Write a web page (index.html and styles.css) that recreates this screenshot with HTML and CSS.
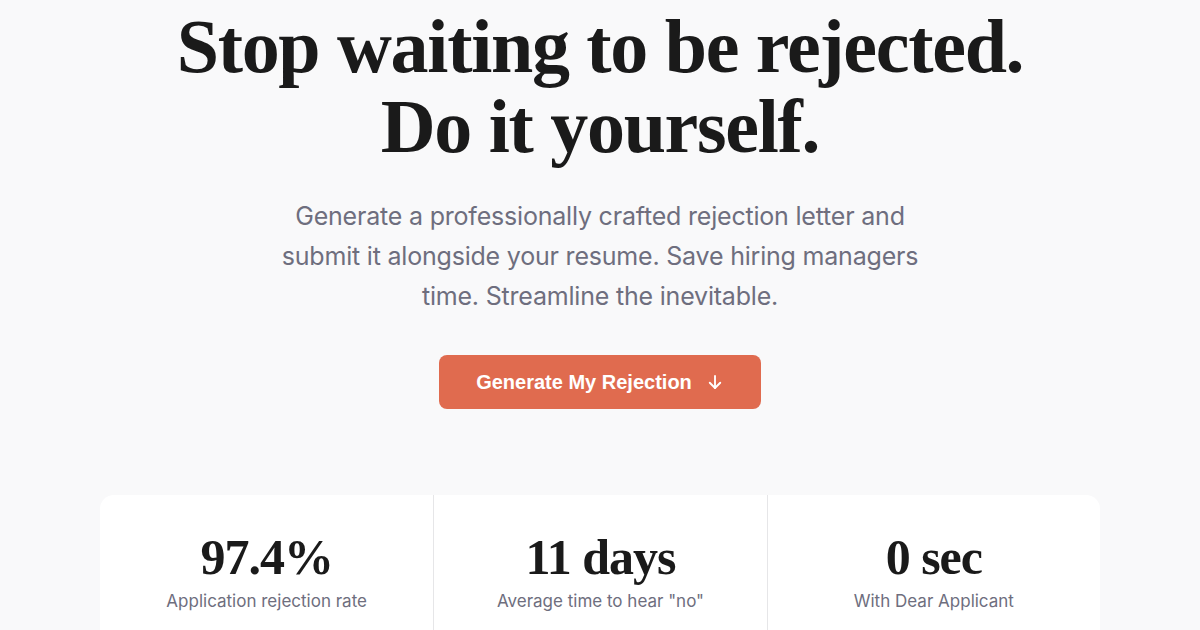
FILE: index.html
```html
<!DOCTYPE html>
<html lang="en">
<head>
    <meta charset="UTF-8">
    <meta name="viewport" content="width=device-width, initial-scale=1.0">
    <title>Dear Applicant</title>
    <link rel="stylesheet" href="styles.css">
</head>
<body>
    <section class="hero">
        <h1 class="headline">Stop waiting to be rejected.<br>Do it yourself.</h1>
        <p class="lead">Generate a professionally crafted rejection letter and submit it alongside your resume. Save hiring managers time. Streamline the inevitable.</p>
        <button class="cta">
            Generate My Rejection
            <svg class="cta-icon" width="18" height="18" viewBox="0 0 24 24" fill="none" stroke="currentColor" stroke-width="2.5" stroke-linecap="round" stroke-linejoin="round">
                <path d="M12 4v16"/>
                <path d="M5 13l7 7 7-7"/>
            </svg>
        </button>
    </section>

    <section class="stats">
        <div class="stat">
            <div class="stat-value">97.4%</div>
            <div class="stat-label">Application rejection rate</div>
        </div>
        <div class="stat">
            <div class="stat-value">11 days</div>
            <div class="stat-label">Average time to hear "no"</div>
        </div>
        <div class="stat">
            <div class="stat-value">0 sec</div>
            <div class="stat-label">With Dear Applicant</div>
        </div>
    </section>
</body>
</html>
```

FILE: styles.css
```css
body { margin: 0; background: #f9f9fa; font-family: Inter, "Noto Sans", sans-serif; color: #1a1a1a; }

.hero { display: flex; flex-direction: column; align-items: center; text-align: center; padding-top: 6px; }
.headline { margin: 0; font-family: "Liberation Serif", "Times New Roman", serif; font-weight: 700; font-size: 76px; line-height: 80px; letter-spacing: -1.3px; color: #1a1a1a; }
.lead { margin: 30px 0 0; max-width: 660px; font-size: 25px; line-height: 40px; color: #6e6e7e; font-weight: 400; letter-spacing: -0.2px; }

.cta { margin-top: 39px; display: flex; align-items: center; gap: 14px; height: 54px; padding: 0 37px; border: none; border-radius: 8px; background: #e06b4f; color: #fff; font-family: "Liberation Sans", Arial, sans-serif; font-weight: 700; font-size: 20px; cursor: pointer; }
.cta-icon { display: block; }

.stats { display: grid; grid-template-columns: repeat(3, 1fr); width: 1000px; margin: 86px auto 0; background: #fff; border-radius: 14px; }
.stat { display: flex; flex-direction: column; align-items: center; padding: 32px 0 40px; }
.stat + .stat { border-left: 1px solid #e6e6e8; }
.stat-value { font-family: "Liberation Serif", "Times New Roman", serif; font-weight: 700; font-size: 50px; line-height: 60px; letter-spacing: -1px; }
.stat-label { margin-top: 4px; font-size: 17px; color: #6e6e7e; }
```
